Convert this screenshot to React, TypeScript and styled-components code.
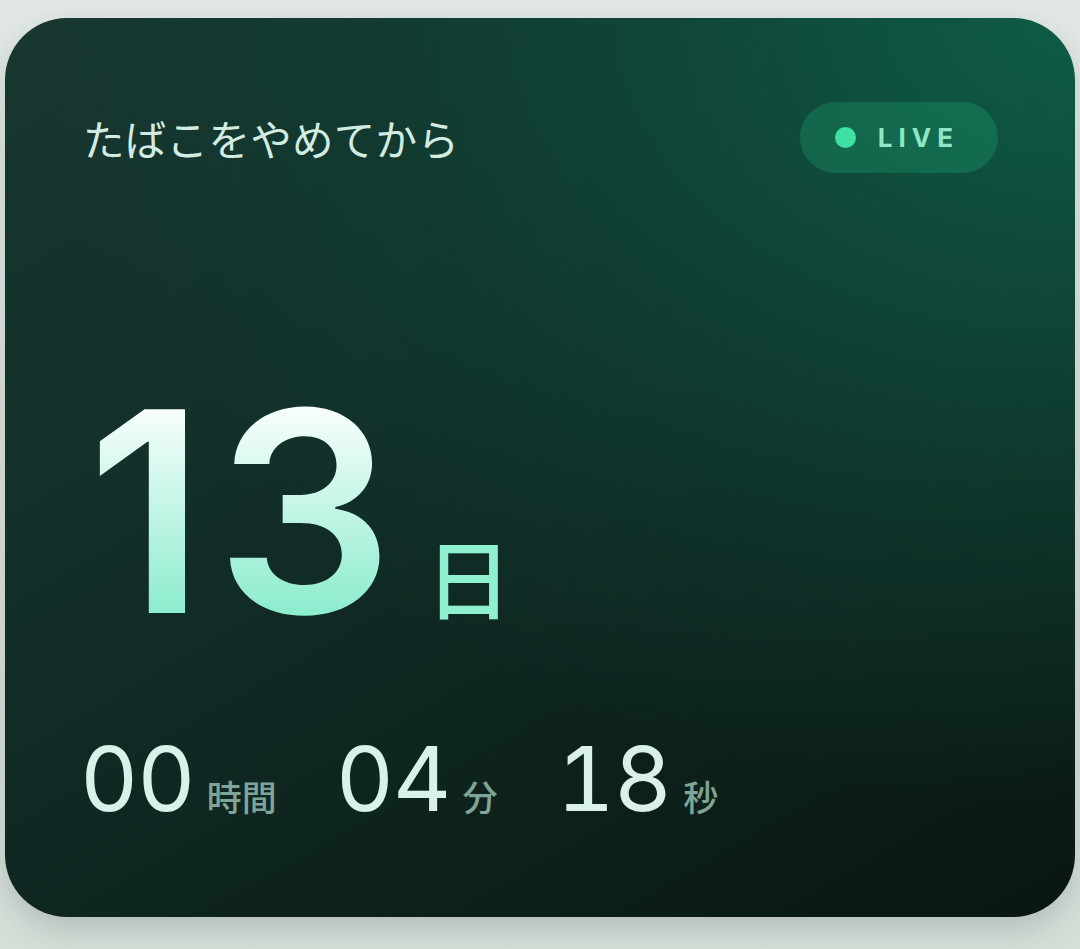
import React from "react";
import styled, { createGlobalStyle } from "styled-components";

const Global = createGlobalStyle`
  html, body { margin: 0; padding: 0; }
  body {
    background: #dfe6e1;
    font-family: Inter, "Noto Sans CJK JP", sans-serif;
  }
`;

const Page = styled.div`
  width: 1080px;
  height: 949px;
  padding: 18px 5px 32px 5px;
  box-sizing: border-box;
  background: linear-gradient(180deg, #e2e9e5 0%, #d6ded8 100%);
`;

const Card = styled.div`
  height: 899px;
  border-radius: 62px;
  box-sizing: border-box;
  padding: 84px 77px 0 80px;
  display: flex;
  flex-direction: column;
  background:
    radial-gradient(ellipse 110% 100% at 100% 0%, rgba(14, 92, 70, 1) 0%, rgba(15, 74, 58, 0.82) 35%, rgba(15, 64, 52, 0.5) 60%, rgba(15, 50, 42, 0) 88%),
    linear-gradient(150deg, #183731 0%, #13302a 35%, #0e241f 65%, #09170f 100%);
  box-shadow: 0 12px 30px rgba(20, 40, 32, 0.18);
  color: #d8efe6;
`;

const Header = styled.div`
  display: flex;
  align-items: center;
  justify-content: space-between;
`;

const Title = styled.div`
  font-family: "Noto Sans CJK JP", sans-serif;
  font-size: 41.5px;
  font-weight: 400;
  color: #d3ece2;
  letter-spacing: 0.3px;
  margin-left: -2px;
`;

const Pill = styled.div`
  display: flex;
  align-items: center;
  gap: 22px;
  height: 71px;
  padding: 0 39px 0 35px;
  border-radius: 36px;
  background: rgba(30, 170, 115, 0.3);
`;

const Dot = styled.span`
  width: 21px;
  height: 21px;
  border-radius: 50%;
  background: #3ee0a4;
`;

const LiveText = styled.span`
  font-family: Inter, sans-serif;
  font-size: 26px;
  font-weight: 700;
  letter-spacing: 6px;
  color: #8fe6c5;
`;

const Main = styled.div`
  display: flex;
  align-items: baseline;
  margin-top: 199px;
  gap: 22px;
`;

const BigNumber = styled.span`
  font-family: Inter, sans-serif;
  font-size: 280px;
  font-weight: 600;
  line-height: 1;
  letter-spacing: 10px;
  margin-left: 2px;
  background: linear-gradient(180deg, #ffffff 8%, #8eeccf 85%);
  -webkit-background-clip: text;
  background-clip: text;
  color: transparent;
`;

const DayUnit = styled.span`
  font-family: "Noto Sans CJK JP", sans-serif;
  font-size: 86px;
  font-weight: 500;
  color: #8ff0cf;
`;

const TimeRow = styled.div`
  display: flex;
  align-items: baseline;
  gap: 59px;
  margin-top: 82px;
  margin-left: -5px;
`;

const TimeItem = styled.div`
  display: flex;
  align-items: baseline;
  gap: 12px;
`;

const TimeNum = styled.span`
  font-family: Inter, sans-serif;
  font-size: 90px;
  font-weight: 400;
  line-height: 1;
  color: #d9f1e8;
  letter-spacing: -1px;
  font-variant-numeric: tabular-nums;
`;

const TimeUnit = styled.span`
  font-family: "Noto Sans CJK JP", sans-serif;
  font-size: 35px;
  font-weight: 500;
  color: #7ea597;
`;

const times = [
  { n: "00", u: "時間" },
  { n: "04", u: "分" },
  { n: "18", u: "秒" },
];

export default function App() {
  return (
    <>
      <Global />
      <Page>
        <Card>
          <Header>
            <Title>たばこをやめてから</Title>
            <Pill>
              <Dot />
              <LiveText>LIVE</LiveText>
            </Pill>
          </Header>
          <Main>
            <BigNumber>13</BigNumber>
            <DayUnit>日</DayUnit>
          </Main>
          <TimeRow>
            {times.map((t) => (
              <TimeItem key={t.u}>
                <TimeNum>{t.n}</TimeNum>
                <TimeUnit>{t.u}</TimeUnit>
              </TimeItem>
            ))}
          </TimeRow>
        </Card>
      </Page>
    </>
  );
}
